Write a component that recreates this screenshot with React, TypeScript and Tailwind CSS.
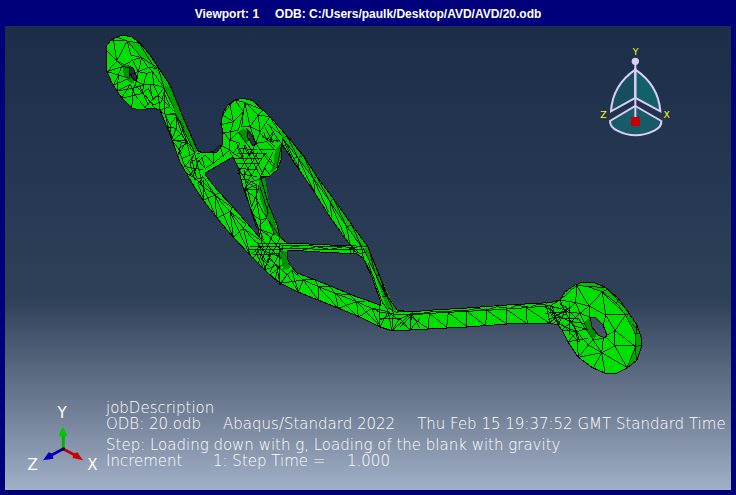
const OUTLINE =
  "M106 50L107 45L111 40L117 37L123 35L132 37L140 43L150 55L158 67L170 85L177 102L185 122L193 140L198 151L203 153L217 152L222 145L223 133L221 123L223 113L227 106L235 100L243 98L253 101L263 110L273 120L287 136L303 155L317 177L333 198L352 225L368 247L380 277L388 297L397 310L410 312L433 310L467 308L507 305L543 303L553 302L560 300L565 292L575 285L583 282L595 283L605 287L618 298L628 312L637 325L641 337L641 348L637 360L627 368L617 373L605 373L593 368L578 357L568 342L562 330L558 325L550 323L507 324L467 327L428 329L393 331L380 327L360 317L338 308L318 300L298 292L280 283L268 273L250 255L233 237L217 218L203 200L192 183L180 162L172 140L167 127L160 110L153 108L140 110L132 108L122 98L113 85L107 72L106 62Z";

const HOLES =
  "M205 173L217 166L233 157L238 167L243 187L250 207L258 227L260 238L246 222L232 206L218 191L206 176ZM287 243L280 237L277 225L268 203L262 182L260 177L270 176L277 170L281 160L282 144L288 153L298 168L313 190L330 217L348 242L352 246L330 245ZM287 250L320 252L357 254L363 258L372 277L380 300L380 305L357 297L323 283L297 273L290 265L287 257ZM129 66L133 68L136 75L136 81L132 78L130 73ZM247 129L252 135L256 144L253 146L248 138ZM590 317L595 317L603 325L607 335L605 338L598 335L592 327Z";

type Region = { at: string; shades: { tone: string; d: string }[]; mesh: string };

// Each region is drawn on a grid three times finer than the viewport.
const REGIONS: Region[] = [
  {
    at: "translate(90 25) scale(0.33333)",
    shades: [
      { tone: "#00c400", d: "M112 48L150 55L205 125L240 180L222 185L200 140L155 98Z" },
      { tone: "#00a000", d: "M222 185L240 180L262 230L285 290L325 380L300 350L265 272Z" },
      { tone: "#009000", d: "M97 125L105 117L116 122L120 148L135 172L122 176L102 150Z" },
    ],
    mesh:
      "M80 36L112 48L155 98L205 130L222 188L262 270L290 348L320 382M62 45L112 48L150 55M70 42L80 108L47 75M112 48L80 108M112 48L122 90L155 98M80 108L52 140L100 124L80 108L105 120L128 105L155 98M52 140L85 150L95 125M85 150L70 180L118 160L85 150L82 198L120 178L95 220M82 198L130 190L125 248M120 178L135 210L95 220M128 105L145 140L155 98L175 128L200 130M145 140L170 145L188 140L175 128L145 140L140 168L160 180L170 145M188 140L190 178L160 180M188 140L222 188L190 178L205 210L222 188M160 180L158 205L135 180M158 205L175 190L190 220L205 210M135 210L158 205L180 230L195 250M135 210L165 248L180 230L205 212L210 255M165 210L190 240L215 230L225 188L225 268L245 345M205 210L240 245L210 255L225 268L262 270L240 245L225 210M225 268L240 300L262 270L258 310L230 305M240 300L245 345L258 310L290 348L245 345M275 350L265 390L290 348L300 390M262 270L300 320M145 50L195 130M140 168L130 190L160 180M120 150L145 140M180 180L188 225M148 180L175 240M97 125L120 128L118 160M250 350L275 385",
  },
  {
    at: "translate(170 90) scale(0.33333)",
    shades: [
      { tone: "#00a000", d: "M0 0L15 25L85 182L75 190L15 70Z" },
      { tone: "#009000", d: "M205 125L220 115L232 122L240 152L225 160L210 140Z" },
      { tone: "#009800", d: "M315 180L335 160L332 205L320 235L295 255L310 225Z" },
      { tone: "#009800", d: "M270 265L285 262L300 360L265 300Z" },
    ],
    mesh:
      "M15 70L75 190M0 70L15 70L35 130L10 150M15 70L40 110L35 130L50 160L25 175M10 150L50 160L75 190L35 205L25 175M35 205L45 230L75 190L60 220L90 200M45 230L100 240M60 220L75 270L100 260M50 235L70 260L85 210L100 230M45 245L95 280M55 260L85 225M65 205L80 265M75 195L92 260M60 250L100 290M80 190L130 185L150 165L180 180L130 220L105 195L85 215M130 220L105 235L95 200M130 185L130 220M150 165L160 200M158 125L180 150L180 180M180 45L158 75L190 95L180 45L195 30L220 65L225 38L195 30M158 75L152 105L190 95L182 125L158 130M190 95L220 65L205 120L182 125M220 65L215 110L240 110L225 38L265 75L240 110M225 38L280 60L265 75L300 80L340 145M240 110L265 75L270 125L240 110L258 160L270 125M300 80L270 125M182 125L180 150L210 160L190 190L180 180M180 150L205 125L240 175M258 160L290 155L315 180L270 180L258 160M255 165L240 195L225 165L215 205L190 190M200 160L220 200M230 160L270 210M210 175L260 180M200 190L290 190M190 205L275 205M200 220L270 220M205 235L265 240M200 250L260 260M180 185L230 280M200 170L250 270M220 165L275 265M240 175L280 255M210 240L245 180M220 260L265 185M235 270L285 190M310 185L270 260L285 235L300 255M285 190L315 225M270 180L310 230M315 145L335 160L320 235M280 125L290 150L310 125L300 155L330 150M275 140L325 155M270 130L315 170M285 110L310 160M300 110L325 150M290 100L340 140M340 145L390 240M340 145L390 210M340 165L370 175L360 145M370 205L390 200M225 240L225 270L245 350L265 300L220 300L245 275L285 262M225 270L265 300L270 265M100 260L85 280L135 315L100 260M100 325L85 285",
  },
  {
    at: "translate(180 150) scale(0.33333)",
    shades: [
      { tone: "#009800", d: "M235 85L248 95L265 160L302 265L285 255L260 205L240 145Z" },
      { tone: "#009800", d: "M305 300L320 305L330 350L318 360L300 325Z" },
    ],
    mesh:
      "M60 85L105 135L150 185L190 235L240 290M70 90L70 150L105 135L110 205L150 185L160 262L190 235L210 315L240 290L255 360M110 205L60 90M160 262L105 135M210 315L150 185M105 135L118 128M105 135L155 172M150 185L198 222M150 185L158 172M190 235L198 222M190 235L240 270M185 90L205 90L195 118L230 105L205 90M195 118L235 152L215 190L195 118M230 105L230 150L240 210L215 190L232 235L260 205L240 210M230 150L260 205L265 160M240 210L245 280M232 235L285 255L265 210L302 265M240 110L265 190M250 270L240 240L270 260M210 290L300 290M205 300L310 300M235 280L320 280M220 315L310 310M240 265L305 330M230 275L300 360M230 300L265 340M240 320L270 350M260 250L310 310M245 330L280 250M255 350L300 265M270 365L310 285M220 325L255 275M235 340L250 290M255 360L265 325L290 345L255 360L285 390L295 350L330 340M290 345L300 405L320 375L290 345M270 300L265 340M300 280L300 350M225 300L250 355M245 300L325 330",
  },
  {
    at: "translate(280 130) scale(0.33333)",
    shades: [
      { tone: "#00c000", d: "M0 0L20 18L70 75L110 140L160 205L215 285L265 350L245 350L200 290L150 215L100 145L55 85L8 25Z" },
      { tone: "#00a000", d: "M265 350L300 440L350 540L320 535L285 430L250 355Z" },
      { tone: "#009000", d: "M0 370L20 365L22 400L30 415L10 420Z" },
    ],
    mesh:
      "M8 25L55 85L100 145L150 215L200 290L245 350M8 50L8 25L20 18M20 18L55 85L70 75L100 145L110 140L150 215L160 205L200 290L215 285L245 350M55 85L55 115M100 145L105 185M150 215L155 262M200 290L210 345M8 25L45 105M55 85L100 180M100 145L145 245M150 215L195 320M35 35L70 80M205 345L245 350L265 350M225 325L245 350L250 385M210 345L240 372L260 365M250 355L285 430L300 440M265 350L285 430L318 500L300 440M250 385L285 450M265 400L310 525M285 430L335 530M305 500L325 500L350 540M0 345L230 352M0 355L245 360M30 352L70 346M70 360L110 350M110 350L150 358M150 358L190 350M190 360L225 355M215 345L210 370M200 350L235 370M225 350L220 372",
  },
  {
    at: "translate(260 230) scale(0.33333)",
    shades: [],
    mesh:
      "M95 120L130 150L175 170L225 190L290 215L335 235L360 245M60 160L95 120L115 185L130 150L175 210L175 170L235 235L225 190L295 262L290 215L360 290M30 135L60 110L60 160M60 160L130 150M80 130L115 185M235 235L290 215M295 262L335 235L360 290M130 150L165 148L175 170L210 170L225 190L270 195L290 215L315 215M360 290L395 303L385 245L360 290M340 235L385 245L415 270L455 250M350 245L420 255M360 265L420 265M360 225L360 290M370 220L385 245M385 235L415 250M395 225L400 250L360 270M400 250L395 303L450 300L420 265L395 303M455 250L395 303M455 250L480 295M450 300L455 250L480 250M450 300L480 265M410 245L480 245",
  },
  {
    at: "translate(400 290) scale(0.33333)",
    shades: [],
    mesh:
      "M0 75L35 75L90 70L145 67L200 64L260 61L320 57L380 53L440 48M30 75L32 120L0 95M32 80L85 116L88 70L140 112L145 67L200 110L200 64L257 107L260 61L320 102L318 57L382 102L378 53L450 100L440 48M30 80L0 110M35 68L55 72L110 63L145 66L170 60L200 62L230 55L260 60L290 50L330 55L350 46L390 52L410 44L440 42M440 45L480 105L450 50L500 60L470 75L440 48M450 100L470 75L510 95M460 100L500 70L480 40L510 60",
  },
  {
    at: "translate(545 270) scale(0.33333)",
    shades: [
      { tone: "#00c000", d: "M95 46L115 36L150 38L180 52L220 85L250 125L242 132L215 100L172 66L130 50Z" },
      { tone: "#00a800", d: "M242 132L250 125L275 165L287 200L288 235L275 270L245 293L270 230L270 190Z" },
      { tone: "#009000", d: "M118 155L135 142L140 170L155 195L145 210L125 180Z" },
    ],
    mesh:
      "M45 90L95 46L130 50L172 66L215 100L242 135L270 190L272 230L245 295M130 50L180 52M172 66L188 58L250 125M215 100L220 85M242 135L255 130M270 190L285 190M272 230L288 225M260 160L280 180M275 165L270 230L275 270M95 46L92 98L132 108L95 46M132 108L172 66L182 135L132 108L135 142M172 66L242 135L182 135L210 182L242 135M182 135L175 165M210 182L187 195M210 182L270 228L210 228L210 182M210 228L187 205M210 228L245 292L170 248L210 228M170 248L175 205L145 210L170 248L180 308M170 248L130 225L100 262L170 248L145 295M100 262L95 185L130 225L145 210M45 90L92 98L60 125L45 90L20 105L0 110M60 125L40 162L95 185L60 125L105 130L132 108M92 98L105 130L135 142M105 130L80 155L95 185L125 175L105 130M50 180L80 155L118 160M95 185L70 215L130 205M50 180L95 185L105 215M0 130L60 125M20 105L40 162M0 110L40 162M10 150L60 125M60 110L100 150M75 100L75 195M50 160L100 215M60 145L100 145M100 145L145 210M40 140L80 155M0 105L45 115M5 160L45 140M80 165L130 180",
  },
];

function Model() {
  return (
    <svg
      viewBox="5 26 726 464"
      preserveAspectRatio="xMidYMid meet"
      className="absolute inset-0 h-full w-full"
      role="img"
      aria-label="Meshed bracket model"
      shapeRendering="crispEdges"
    >
      <path d={OUTLINE + HOLES} fill="#00e000" fillRule="evenodd" />
      {REGIONS.map((r) => (
        <g key={r.at} transform={r.at}>
          {r.shades.map((s) => (
            <path key={s.d} d={s.d} fill={s.tone} />
          ))}
          <path d={r.mesh} fill="none" stroke="#000" strokeWidth="2.4" />
        </g>
      ))}
      <path d={OUTLINE + HOLES} fill="none" stroke="#000" strokeWidth="1" />
    </svg>
  );
}

function ViewCompass() {
  return (
    <svg viewBox="0 0 300 330" className="absolute top-[9px] right-[41px] h-[110px] w-[100px]" role="img" aria-label="View compass">
      <g stroke="#dcccf8" strokeWidth="6">
        <path d="M136 104Q68 150 63 229L136 189Z" fill="#174f60" />
        <path d="M136 104Q205 150 211 229L136 189Z" fill="#126069" />
        <path d="M136 213L214 258Q216 275 193 287Q136 315 82 287Q60 277 60 258Z" fill="#175b68" />
        <path d="M136 80V250" />
      </g>
      <circle cx="136" cy="79" r="11" fill="#dcccf8" />
      <rect x="123" y="246" width="27" height="27" fill="#c40000" />
      <g fill="#ffff00" fontFamily="DejaVu Sans, sans-serif" fontSize="28" textAnchor="middle">
        <text x="137" y="59">Y</text>
        <text x="230" y="249">X</text>
        <text x="40" y="249">Z</text>
      </g>
    </svg>
  );
}

function Triad() {
  return (
    <svg viewBox="75 25 225 210" className="h-[70px] w-[75px]" role="img" aria-label="Axis triad">
      <path d="M190 160V118" stroke="#00b400" strokeWidth="9" />
      <path d="M189 93L202 119Q189 128 176 119Z" fill="#00c800" />
      <path d="M189 160L155 178" stroke="#0000a8" strokeWidth="8" />
      <path d="M129 194L146 170Q160 173 160 189Z" fill="#0000b8" />
      <path d="M190 160L224 178" stroke="#c00000" strokeWidth="8" />
      <path d="M249 194L232 170Q218 173 218 187Z" fill="#c80000" />
      <circle cx="190" cy="160" r="5" fill="#101020" />
      <g fill="#fff" fontFamily="DejaVu Sans, sans-serif" fontSize="45" textAnchor="middle">
        <text x="186" y="68">Y</text>
        <text x="98" y="222">Z</text>
        <text x="277" y="222">X</text>
      </g>
    </svg>
  );
}

export default function App() {
  return (
    <div className="flex min-h-screen flex-col bg-[#00007b] px-[5px] pb-[5px]">
      <header className="flex h-[26px] items-center justify-center gap-4 pt-[2px] font-['Liberation_Sans',Arial,sans-serif] text-xs font-bold text-white">
        <span>Viewport: 1</span>
        <span>ODB: C:/Users/paulk/Desktop/AVD/AVD/20.odb</span>
      </header>
      <main className="relative flex flex-1 flex-col justify-end overflow-hidden bg-[linear-gradient(#1b2d47_0%,#2f4159_59%,#68778e_80%,#a2b0c7_100%)]">
        <Model />
        <ViewCompass />
        <div className="relative flex items-start gap-[6px] pb-4 pl-5">
          <Triad />
          <div className="-mt-1 font-['DejaVu_Sans',Verdana,sans-serif] text-[15px] leading-4 font-extralight whitespace-nowrap text-white">
            <p>jobDescription</p>
            <p className="flex gap-[22px]">
              <span>ODB: 20.odb</span>
              <span>Abaqus/Standard 2022</span>
              <span>Thu Feb 15 19:37:52 GMT Standard Time</span>
            </p>
            <p className="mt-[5px]">Step: Loading down with g, Loading of the blank with gravity</p>
            <p className="flex">
              <span className="w-[107px]">Increment</span>
              <span className="w-[134px]">1: Step Time =</span>
              <span>1.000</span>
            </p>
          </div>
        </div>
      </main>
    </div>
  );
}
